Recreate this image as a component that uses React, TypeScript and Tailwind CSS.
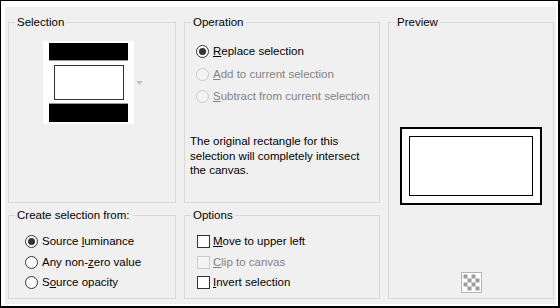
import clsx from "clsx";
import type { ReactNode } from "react";

const font = { fontFamily: '"Liberation Sans", Arial, sans-serif' };

function Radio({ checked, disabled }: { checked?: boolean; disabled?: boolean }) {
  return (
    <span
      className={clsx(
        "flex h-[13px] w-[13px] shrink-0 items-center justify-center rounded-full border",
        disabled ? "border-[#cccccc] bg-[#f4f4f4]" : "border-[#333333] bg-white"
      )}
    >
      {checked && <span className="h-[7px] w-[7px] rounded-full bg-[#333333]" />}
    </span>
  );
}

function Check({ disabled }: { disabled?: boolean }) {
  return (
    <span
      className={clsx(
        "h-[13px] w-[13px] shrink-0 border",
        disabled ? "border-[#cccccc] bg-[#f4f4f4]" : "border-[#333333] bg-white"
      )}
    />
  );
}

function Row({ children, disabled, control, gap }: { children: ReactNode; disabled?: boolean; control: ReactNode; gap: string }) {
  return (
    <div className={clsx("flex h-[15px] items-center", gap, disabled ? "text-[#838383]" : "text-black")}>
      {control}
      <span className="whitespace-nowrap">{children}</span>
    </div>
  );
}

function Group({ title, className, children }: { title: string; className?: string; children: ReactNode }) {
  return (
    <fieldset className={clsx("min-w-0 border border-[#d9d9d9]", className)}>
      <legend className="ml-[6px] px-[2px] text-black">{title}</legend>
      {children}
    </fieldset>
  );
}

export default function App() {
  return (
    <div
      className="h-[308px] w-[560px] border-b-2 border-l border-r-2 border-t border-black text-[11.5px] leading-[15px]"
      style={font}
    >
      <div className="h-full w-full border-b-2 border-l-4 border-r-2 border-t-[6px] border-white bg-[#f0f0f0]">
        <div className="grid grid-cols-[168px_196px_166px] grid-rows-[188px_91px] gap-x-[8px] gap-y-[5px] pl-[3px] pt-[8px]">
          <Group title="Selection">
            <div className="ml-[34px] mt-[11px] flex items-center">
              <div className="flex h-[83px] w-[91px] flex-col bg-white px-[6px] py-[2px]">
                <div className="h-[18px] border-b border-[#9a9a9a] bg-black" />
                <div className="ml-[5px] mr-[4px] mt-[4px] h-[35px] border border-[#333333] bg-white" />
                <div className="mt-[3px] h-[19px] border-t border-[#9a9a9a] bg-black" />
              </div>
              <svg width="7" height="4" viewBox="0 0 7 4" className="ml-[2px]">
                <path d="M0 0 H7 L3.5 4 Z" fill="#c4c4c4" />
              </svg>
            </div>
          </Group>

          <Group title="Operation">
            <div className="mt-[14px] flex flex-col gap-[7.5px] pl-[11px]">
              <Row control={<Radio checked />} gap="gap-[4px]">
                <span className="underline">R</span>eplace selection
              </Row>
              <Row control={<Radio disabled />} gap="gap-[4px]" disabled>
                <span className="underline">A</span>dd to current selection
              </Row>
              <Row control={<Radio disabled />} gap="gap-[4px]" disabled>
                <span className="underline">S</span>ubtract from current selection
              </Row>
            </div>
            <p className="mt-[30px] pl-[5px] leading-[14.5px] text-black">
              The original rectangle for this
              <br />
              selection will completely intersect
              <br />
              the canvas.
            </p>
          </Group>

          <Group title="Preview" className="row-span-2">
            <div className="flex flex-col items-center">
              <div className="mt-[97px] h-[78px] w-[142px] border-2 border-black bg-white p-[7px]">
                <div className="h-full w-full border border-black" />
              </div>
              <svg width="21" height="21" viewBox="0 0 21 21" className="mt-[67px]">
                <rect x="0.5" y="0.5" width="20" height="20" fill="#ffffff" stroke="#b3b3b3" />
                {[0, 1, 2, 3].flatMap((r) =>
                  [0, 1, 2, 3].map((c) =>
                    (r + c) % 2 === 0 ? (
                      <rect key={`${r}-${c}`} x={2.5 + c * 4} y={2.5 + r * 4} width="4" height="4" fill="#9c9c9c" />
                    ) : null
                  )
                )}
              </svg>
            </div>
          </Group>

          <Group title="Create selection from:">
            <div className="mt-[11px] flex flex-col gap-[5.5px] pl-[16px]">
              <Row control={<Radio checked />} gap="gap-[4px]">
                Source <span className="underline">l</span>uminance
              </Row>
              <Row control={<Radio />} gap="gap-[4px]">
                Any non-<span className="underline">z</span>ero value
              </Row>
              <Row control={<Radio />} gap="gap-[4px]">
                S<span className="underline">o</span>urce opacity
              </Row>
            </div>
          </Group>

          <Group title="Options">
            <div className="mt-[11px] flex flex-col gap-[5.5px] pl-[12px]">
              <Row control={<Check />} gap="gap-[3px]">
                <span className="underline">M</span>ove to upper left
              </Row>
              <Row control={<Check disabled />} gap="gap-[3px]" disabled>
                <span className="underline">C</span>lip to canvas
              </Row>
              <Row control={<Check />} gap="gap-[3px]">
                <span className="underline">I</span>nvert selection
              </Row>
            </div>
          </Group>
        </div>
      </div>
    </div>
  );
}
